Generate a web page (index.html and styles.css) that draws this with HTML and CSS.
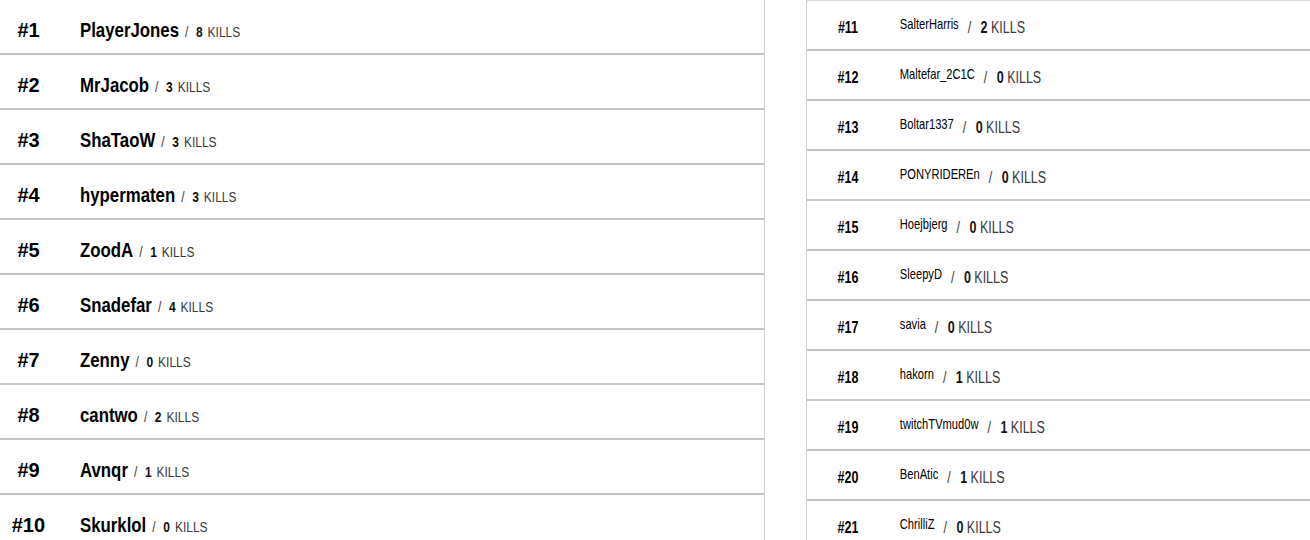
FILE: index.html
```html
<!DOCTYPE html>
<html lang="en">
<head>
<meta charset="utf-8">
<title>Leaderboard</title>
<link rel="stylesheet" href="styles.css">
</head>
<body>
<main class="board">
  <section class="panel panel-main">
    <div class="row"><div class="line"><span class="rank"><span class="num">#1</span></span><span class="name">PlayerJones</span><span class="kills"><span class="slash">/</span> <b>8</b> KILLS</span></div></div>
    <div class="row"><div class="line"><span class="rank"><span class="num">#2</span></span><span class="name">MrJacob</span><span class="kills"><span class="slash">/</span> <b>3</b> KILLS</span></div></div>
    <div class="row"><div class="line"><span class="rank"><span class="num">#3</span></span><span class="name">ShaTaoW</span><span class="kills"><span class="slash">/</span> <b>3</b> KILLS</span></div></div>
    <div class="row"><div class="line"><span class="rank"><span class="num">#4</span></span><span class="name">hypermaten</span><span class="kills"><span class="slash">/</span> <b>3</b> KILLS</span></div></div>
    <div class="row"><div class="line"><span class="rank"><span class="num">#5</span></span><span class="name">ZoodA</span><span class="kills"><span class="slash">/</span> <b>1</b> KILLS</span></div></div>
    <div class="row"><div class="line"><span class="rank"><span class="num">#6</span></span><span class="name">Snadefar</span><span class="kills"><span class="slash">/</span> <b>4</b> KILLS</span></div></div>
    <div class="row"><div class="line"><span class="rank"><span class="num">#7</span></span><span class="name">Zenny</span><span class="kills"><span class="slash">/</span> <b>0</b> KILLS</span></div></div>
    <div class="row"><div class="line"><span class="rank"><span class="num">#8</span></span><span class="name">cantwo</span><span class="kills"><span class="slash">/</span> <b>2</b> KILLS</span></div></div>
    <div class="row"><div class="line"><span class="rank"><span class="num">#9</span></span><span class="name">Avnqr</span><span class="kills"><span class="slash">/</span> <b>1</b> KILLS</span></div></div>
    <div class="row"><div class="line"><span class="rank"><span class="num">#10</span></span><span class="name">Skurklol</span><span class="kills"><span class="slash">/</span> <b>0</b> KILLS</span></div></div>
  </section>
  <section class="panel panel-side">
    <div class="row"><div class="line"><span class="rank">#11</span><span class="name">SalterHarris</span><span class="kills"><span class="slash">/</span> <b>2</b> KILLS</span></div></div>
    <div class="row"><div class="line"><span class="rank">#12</span><span class="name">Maltefar_2C1C</span><span class="kills"><span class="slash">/</span> <b>0</b> KILLS</span></div></div>
    <div class="row"><div class="line"><span class="rank">#13</span><span class="name">Boltar1337</span><span class="kills"><span class="slash">/</span> <b>0</b> KILLS</span></div></div>
    <div class="row"><div class="line"><span class="rank">#14</span><span class="name">PONYRIDEREn</span><span class="kills"><span class="slash">/</span> <b>0</b> KILLS</span></div></div>
    <div class="row"><div class="line"><span class="rank">#15</span><span class="name">Hoejbjerg</span><span class="kills"><span class="slash">/</span> <b>0</b> KILLS</span></div></div>
    <div class="row"><div class="line"><span class="rank">#16</span><span class="name">SleepyD</span><span class="kills"><span class="slash">/</span> <b>0</b> KILLS</span></div></div>
    <div class="row"><div class="line"><span class="rank">#17</span><span class="name">savia</span><span class="kills"><span class="slash">/</span> <b>0</b> KILLS</span></div></div>
    <div class="row"><div class="line"><span class="rank">#18</span><span class="name">hakorn</span><span class="kills"><span class="slash">/</span> <b>1</b> KILLS</span></div></div>
    <div class="row"><div class="line"><span class="rank">#19</span><span class="name">twitchTVmud0w</span><span class="kills"><span class="slash">/</span> <b>1</b> KILLS</span></div></div>
    <div class="row"><div class="line"><span class="rank">#20</span><span class="name">BenAtic</span><span class="kills"><span class="slash">/</span> <b>1</b> KILLS</span></div></div>
    <div class="row"><div class="line"><span class="rank">#21</span><span class="name">ChrilliZ</span><span class="kills"><span class="slash">/</span> <b>0</b> KILLS</span></div></div>
  </section>
</main>
</body>
</html>
```
FILE: styles.css
```css
html, body {
  margin: 0;
  padding: 0;
  background: #ffffff;
}

body {
  font-family: "Liberation Sans", Arial, sans-serif;
  color: #111111;
  overflow: hidden;
}

.board {
  display: flex;
  align-items: flex-start;
  gap: 41px;
}

.panel {
  box-sizing: border-box;
}

.panel-main {
  width: 765px;
  border-right: 1px solid #cfcfcf;
}

.panel-side {
  width: 504px;
  border-left: 1px solid #cfcfcf;
  border-top: 1px solid #d6d6d6;
}

.row {
  box-sizing: border-box;
  border-bottom: 2px solid #c4c4c4;
  white-space: nowrap;
  line-height: 1.2;
}

/* condensed lettering: the text line is narrowed horizontally */
.line {
  transform-origin: 0 0;
}

.rank {
  display: inline-block;
  text-align: center;
  font-weight: 700;
  color: #000;
}

.kills {
  color: #3a3a3a;
}

.kills b {
  color: #111;
  font-weight: 700;
}

/* main panel */
.panel-main .row {
  height: 55px;
  padding-top: 17px;
  font-size: 21px;
}

.panel-main .line {
  transform: scaleX(0.8);
}

.panel-main .rank {
  width: 71.25px;
  font-size: 21px;
}

.panel-main .num {
  display: inline-block;
  transform: scaleX(1.19);
}

.panel-main .name {
  margin-left: 28.75px;
  font-weight: 700;
  color: #000;
}

.panel-main .kills {
  margin-left: 7.5px;
  font-size: 15px;
}

.panel-main .slash {
  margin-right: 5.4px;
}

.panel-main .kills b {
  margin-right: 2px;
}

/* side panel */
.panel-side .row {
  height: 50px;
  padding-top: 15px;
  font-size: 16px;
}

.panel-side .line {
  transform: scaleX(0.78);
}

.panel-side .rank {
  width: 105px;
  font-size: 16px;
}

.panel-side .name {
  margin-left: 14px;
  font-size: 14.3px;
  color: #000;
  vertical-align: 4px;
}

.panel-side .kills {
  margin-left: 11.5px;
  font-size: 16px;
}

.panel-side .slash {
  margin-right: 7.7px;
}
```
